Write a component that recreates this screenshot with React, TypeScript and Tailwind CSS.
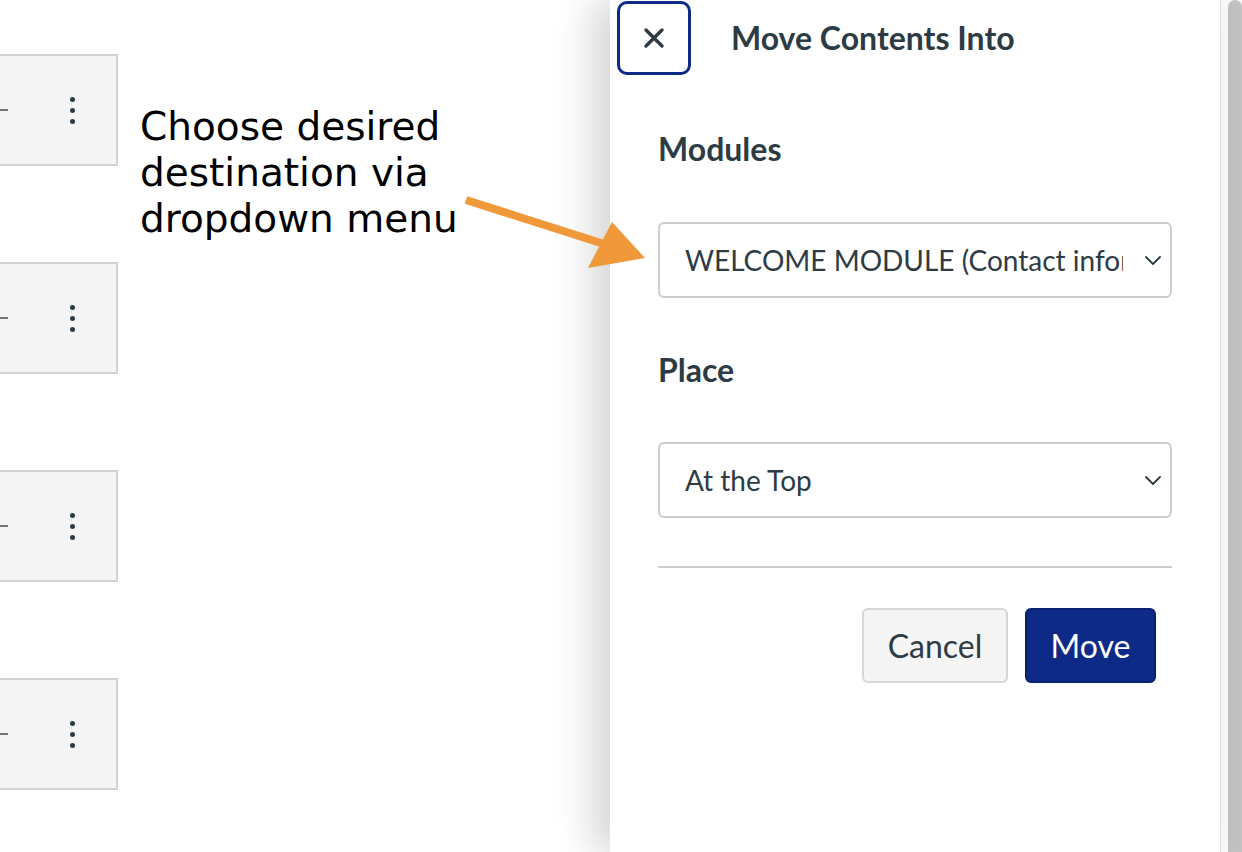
import React from 'react';

const rows = [0, 1, 2, 3];

function ModuleStub() {
  return (
    <div className="flex h-[112px] w-[118px] items-center border-y-2 border-r-2 border-[#cfd3d6] bg-[#f4f4f4]">
      <div className="h-[2px] w-[8px] bg-[#6b7780]" />
      <div className="ml-[62px] flex flex-col gap-[6px]">
        <span className="block h-[5px] w-[5px] rounded-full bg-[#2d3b45]" />
        <span className="block h-[5px] w-[5px] rounded-full bg-[#2d3b45]" />
        <span className="block h-[5px] w-[5px] rounded-full bg-[#2d3b45]" />
      </div>
    </div>
  );
}

function Chevron() {
  return (
    <svg width="18" height="11" viewBox="0 0 18 11" fill="none" className="shrink-0">
      <polyline points="2,2 9,9 16,2" stroke="#2d3b45" strokeWidth="1.8" strokeLinecap="round" strokeLinejoin="round" />
    </svg>
  );
}

function SelectBox({ value }: { value: string }) {
  return (
    <div className="flex h-[76px] w-[514px] items-center rounded-[6px] border-2 border-[#c7cdd1] bg-white pl-[25px] pr-[8px]">
      <div className="w-[438px] overflow-hidden whitespace-nowrap text-[28px] text-[#2d3b45]">{value}</div>
      <div className="ml-auto">
        <Chevron />
      </div>
    </div>
  );
}

export default function App() {
  return (
    <div className="relative flex h-[852px] w-[1242px] overflow-hidden bg-white">
      {/* list of modules behind the tray */}
      <div className="flex w-[610px] shrink-0 flex-col gap-[96px] pt-[54px]">
        {rows.map((r) => (
          <ModuleStub key={r} />
        ))}
      </div>

      {/* move tray */}
      <div
        className="relative z-10 flex w-[610px] shrink-0 flex-col bg-white shadow-[-18px_0_36px_rgba(0,0,0,0.16)]"
        style={{ fontFamily: 'Lato, "Noto Sans", sans-serif' }}
      >
        <div className="flex items-center pl-[7px] pt-[1px]">
          <button className="flex h-[74px] w-[74px] items-center justify-center rounded-[10px] border-[3px] border-[#0e2a87] bg-white">
            <svg width="22" height="22" viewBox="0 0 22 22" fill="none">
              <path d="M3 3 L19 19 M19 3 L3 19" stroke="#2d3b45" strokeWidth="3.4" strokeLinecap="round" />
            </svg>
          </button>
          <h1 className="ml-[40px] text-[32px] font-bold leading-[34px] text-[#2d3b45]">Move Contents Into</h1>
        </div>

        <div className="flex flex-col pl-[48px]">
          <div className="mt-[57px] text-[32px] font-bold leading-[34px] text-[#2d3b45]">Modules</div>
          <div className="mt-[56px]">
            <SelectBox value="WELCOME MODULE (Contact information)" />
          </div>
          <div className="mt-[55px] text-[32px] font-bold leading-[34px] text-[#2d3b45]">Place</div>
          <div className="mt-[55px]">
            <SelectBox value="At the Top" />
          </div>
          <div className="mt-[48px] h-[2px] w-[514px] bg-[#c7cdd1]" />
          <div className="mt-[40px] flex w-[498px] justify-end gap-[17px]">
            <button className="h-[75px] w-[146px] rounded-[6px] border-2 border-[#d7d7d7] bg-[#f5f5f5] text-[32px] text-[#2d3b45]">
              Cancel
            </button>
            <button className="h-[75px] w-[131px] rounded-[6px] border-2 border-[#0a2171] bg-[#0e2a87] text-[32px] text-white">
              Move
            </button>
          </div>
        </div>
      </div>

      {/* scrollbar */}
      <div className="flex flex-1 border-l border-[#e6e6e6] bg-[#f9f9f9] pl-[7px]">
        <div className="h-full w-full rounded-t-full bg-[#c1c1c1]" />
      </div>

      {/* annotation */}
      <p
        className="absolute left-[140px] top-[104px] text-[39px] leading-[46px] text-black"
        style={{ fontFamily: '"DejaVu Sans", Verdana, sans-serif' }}
      >
        Choose desired
        <br />
        destination via
        <br />
        dropdown menu
      </p>
      <svg className="absolute left-0 top-0 z-20" width="1242" height="852" viewBox="0 0 1242 852" fill="none">
        <line x1="466" y1="200" x2="604" y2="244" stroke="#f0993a" strokeWidth="8" />
        <polygon points="588,268 612,222 645,258" fill="#f0993a" />
      </svg>
    </div>
  );
}
